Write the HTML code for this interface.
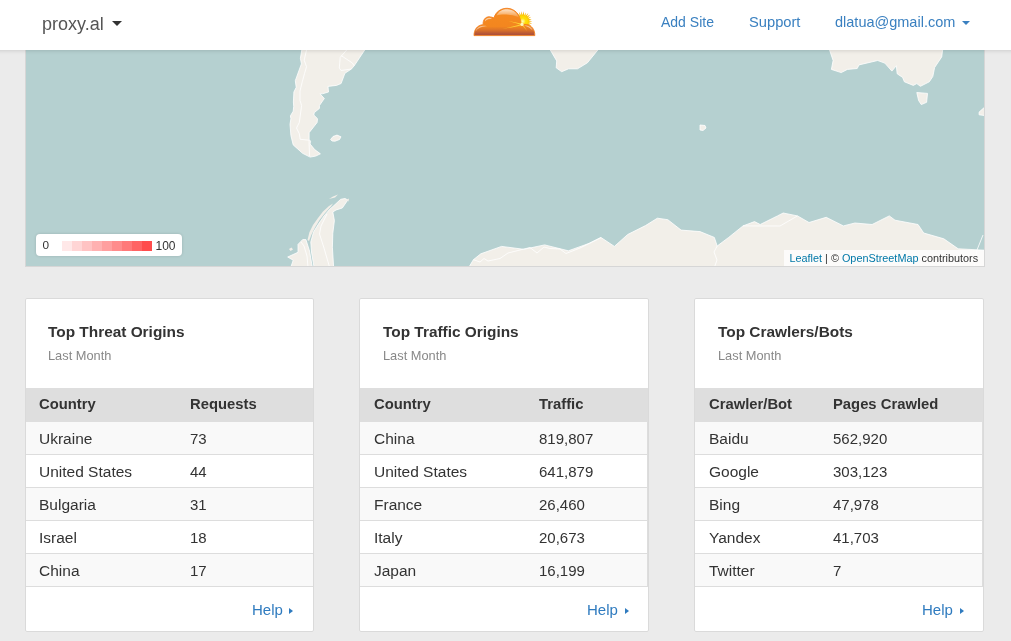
<!DOCTYPE html>
<html><head><meta charset="utf-8">
<style>
*{margin:0;padding:0;box-sizing:border-box}
html,body{width:1011px;height:641px;overflow:hidden;background:#ebebeb;font-family:"Liberation Sans",sans-serif;color:#333}
.abs{position:absolute;white-space:nowrap;line-height:1}
#hdr,#map,.card{will-change:transform}
#hdr{position:absolute;left:0;top:0;width:1011px;height:50px;background:#fff;z-index:5}
#hdr:before{content:"";position:absolute;left:-20px;right:-20px;top:0;height:50px;box-shadow:0 1px 4px rgba(0,0,0,.13);z-index:-1;background:#fff}
#map{position:absolute;left:25px;top:40px;width:960px;height:227px;border:1px solid #d6d6d6;background:#b5d0d0;overflow:hidden}
.card{position:absolute;top:298px;height:334px;background:#fff;border:1px solid #dadada;border-radius:2px;overflow:hidden}
.ttl{font-weight:bold;font-size:15.4px;color:#333}
.sub{font-size:12.8px;color:#888}
.th{position:absolute;left:0;top:89px;height:34px;background:#dedede}
.row{position:absolute;left:0;height:33px;border-bottom:1px solid #ddd}
.odd{background:#f9f9f9}
.r2{width:288px;border-right:1px solid #ddd}
.hd{font-weight:bold;font-size:14.8px;color:#333}
.td{font-size:15.5px;color:#333}
.tn{font-size:15px;color:#333}
.help{font-size:15px;color:#2f7bbf}
.tri{position:absolute;width:0;height:0;border-top:3px solid transparent;border-bottom:3px solid transparent;border-left:4px solid #2f7bbf}
</style></head><body>
<div id="hdr">
  <div class="abs" style="left:42px;top:14.5px;font-size:18px;color:#555">proxy.al</div>
  <div class="abs" style="left:112px;top:21px;width:0;height:0;border-left:5px solid transparent;border-right:5px solid transparent;border-top:5px solid #333"></div>
  <svg class="abs" style="left:470px;top:4px" width="70" height="36" viewBox="470 4 70 36">
    <defs>
      <linearGradient id="cg" gradientUnits="userSpaceOnUse" x1="0" y1="8" x2="0" y2="36">
        <stop offset="0" stop-color="#f68b1f"/>
        <stop offset="0.66" stop-color="#f3861f"/>
        <stop offset="0.8" stop-color="#d8702a"/>
        <stop offset="0.93" stop-color="#b2533a"/>
        <stop offset="1" stop-color="#a94b34"/>
      </linearGradient>
      <radialGradient id="sg" gradientUnits="userSpaceOnUse" cx="522.6" cy="21.3" r="10.5">
        <stop offset="0" stop-color="#fff9a0"/>
        <stop offset="0.5" stop-color="#ffd600"/>
        <stop offset="0.8" stop-color="#f9b214"/>
        <stop offset="1" stop-color="#f6a23a" stop-opacity="0.6"/>
      </radialGradient>
      <radialGradient id="sc" gradientUnits="userSpaceOnUse" cx="522.6" cy="21.3" r="6.5">
        <stop offset="0" stop-color="#fffbc0"/>
        <stop offset="0.5" stop-color="#ffe000"/>
        <stop offset="1" stop-color="#ffd000" stop-opacity="0"/>
      </radialGradient>
      <linearGradient id="hg" x1="0" y1="0" x2="0" y2="1">
        <stop offset="0" stop-color="#fff" stop-opacity="0.75"/>
        <stop offset="1" stop-color="#fff" stop-opacity="0.1"/>
      </linearGradient>
    </defs>
    <polygon fill="url(#sg)" points="532.33,21.30 528.85,22.06 532.47,23.73 528.49,23.53 531.38,25.91 527.78,24.88 530.27,28.09 526.78,26.02 528.44,29.76 525.53,26.88 525.97,30.17 524.11,27.42 523.74,30.65 522.60,27.60 521.33,31.80 521.09,27.42 519.14,30.43 519.67,26.88 517.07,29.31 518.42,26.02 514.52,28.46 517.42,24.88 513.69,25.97 516.71,23.53 512.34,23.83 516.35,22.06 512.53,21.30 516.35,20.54 512.60,18.84 516.71,19.07 514.09,16.83 517.42,17.72 514.90,14.48 518.42,16.58 516.57,12.56 519.67,15.72 519.01,11.83 521.09,15.18 521.34,10.94 522.60,15.00 523.85,11.04 524.11,15.18 525.97,12.43 525.53,15.72 528.54,12.69 526.78,16.58 530.26,14.52 527.78,17.72 531.30,16.74 528.49,19.07 531.77,19.04 528.85,20.54"/>
    <circle cx="522.6" cy="21.3" r="6.5" fill="url(#sc)"/>
    <path d="M474 35.6 C474 30 477 25 483.2 24.7 C482.6 20 485.5 16.8 489 16.8 C491 16.8 493 17.6 494 18 C495.5 12 501 8.1 507.2 8.3 C514.5 8.6 520.5 14 521 24.2 C522.5 24.5 524.5 24.3 526.3 24.4 C531 25 535 29 534.8 35.6 Z" fill="url(#cg)" stroke="#f38020" stroke-width="0.9"/>
    <path d="M496.5 15.5 C498.5 11 503 9.2 507.5 9.3 C513 9.5 517.5 13 518.8 17.5 C514 14.5 502 13.8 496.5 15.5Z" fill="url(#hg)"/>
    <path d="M484.8 21.5 C485 19 487 17.8 489 17.8 C490.5 17.8 491.5 18.3 492 18.8 C489.5 18.8 486.5 19.5 484.8 21.5Z" fill="#fff" opacity=".55"/>
    <path d="M475.5 31.5 C476.5 28 479 26 483 25.7 C485 25.6 487 26 487.5 26.3 C482 26.3 478 28 475.5 31.5Z" fill="#fff" opacity=".5"/>
    <path d="M524 25.5 C527 25.2 531 26 532.8 30.5 C530 27.8 527 26.5 524 25.5Z" fill="#fff" opacity=".5"/>
    <g fill="#ffe43a">
      <path d="M508.5 21 L522 23.8 L522 25 Z" opacity=".85"/>
      <path d="M502 28.8 C510 27.4 516 25.8 522 23.8 L522.3 25 C516 26.6 510 28 502 28.8Z" opacity=".8"/>
      <path d="M521.5 24.4 L522.6 24 L527.2 31 Z" opacity=".75"/>
    </g>
    <circle cx="522" cy="24.4" r="1.6" fill="#fffbd0" opacity=".9"/>
  </svg>
  <div class="abs" style="left:661px;top:15px;font-size:14px;color:#3a80c0">Add Site</div>
  <div class="abs" style="left:749px;top:15px;font-size:14.7px;color:#3a80c0">Support</div>
  <div class="abs" style="left:835px;top:15px;font-size:14.5px;color:#3a80c0">dlatua@gmail.com</div>
  <div class="abs" style="left:962px;top:21px;width:0;height:0;border-left:4px solid transparent;border-right:4px solid transparent;border-top:4px solid #3a80c0"></div>
</div>

<div id="map">
  <svg width="960" height="227" viewBox="25 40 960 227" style="position:absolute;left:-1px;top:-1px">
    <g fill="#f2efe9" stroke="#fff" stroke-width="0.8">
    <!-- South America -->
    <path d="M301.8 40 L366.4 40 L364.7 50 L354.2 65.8 L351.4 69 L344.9 73.3 L343.5 77 L341.1 83.5 L336.5 85.4 L328 86.4 L328.5 92 L322.4 93.8 L320 93.8 L324.3 98.5 L319.4 105.6 L319.4 108.4 L314.3 112.6 L313.8 115 L317.5 118.7 L317.1 122.5 L309.1 132.7 L309.1 139.3 L310.5 141.2 L310.1 144 L314.7 149.6 L320.4 153.8 L315.7 156.1 L310.1 157.1 L302.6 153.3 L293.2 144.9 L290.9 135.5 L290 124.3 L290.9 118.7 L290.4 115.9 L293.2 111.2 L293.7 106.5 L293.4 102 L293.9 92 L296.2 87.3 L295.3 80.7 L301.4 63.9 L300.4 58.3 L301.8 50Z"/>
    <path d="M330.6 139.5 L333 136.5 L337 135.1 L341 136.8 L339.5 139.5 L335 141.2 L332 141Z"/>
    <!-- Antarctic peninsula -->
    <path d="M290.9 267 L293.2 260.2 L287.7 257 L298 252.3 L298 244.4 L302.7 239.6 L305.9 239.6 L309.5 251 L312.3 267Z"/>
    <path d="M314 267 L311.5 252 L310.8 242 L313.5 232 L318.5 224 L324 216 L329.5 209.5 L334 205.5 L340.7 199.3 L345 198.5 L347.8 200 L342.3 208 L336 210 L332.8 212 L334.4 220.6 L332.8 233.3 L332.4 247.2 L333.6 267Z"/>
    <path d="M307.5 240 L309.5 232 L313 225 L318 218 L323 211.5 L329 206 L333 203.5 L331 206.5 L325 213 L319.5 220 L315 227.5 L311.5 234.5 L309 241Z" stroke="none"/>
    <path d="M289 249 L291.5 247.5 L293 249.5 L290.5 251Z" stroke="none"/>
    <path d="M329 199 L333 196.5 L338 194.5 L335 197.5Z" stroke="none"/>
    <path d="M346 200 L349 198.5 L348.5 201.5Z" stroke="none"/>
    <!-- Antarctica coast -->
    <path d="M469 267 L473.4 259.7 L480.8 253.8 L501.6 246.4 L523.9 249.3 L544.6 244.9 L568.4 250.8 L589.1 243.4 L601 237.5 L614.4 246.4 L627.7 234.5 L645.5 225.6 L657.4 218.2 L667.8 219.7 L681.1 230.1 L700 231.6 L714.3 237.4 L717.2 246 L728.7 237.4 L743 225.9 L754.5 221.6 L760.2 224.5 L777.5 215.9 L783.2 213 L797.5 215.9 L809 222.5 L826.2 217.3 L843.4 225.9 L854.9 223 L872.1 224.5 L889.3 215.9 L895 220.2 L918 224.5 L923.7 233 L943.8 238.8 L958.2 248.8 L986 250.3 L986 267Z"/>
    <!-- Africa -->
    <path d="M550.3 40 L550.3 50 L556.7 60.9 L556.2 67.8 L561.7 71.7 L568.6 68.8 L577.5 68.8 L587.4 62.8 L597.8 50 L597.8 40Z"/>
    <!-- Australia -->
    <path d="M829.6 40 L829.6 50.1 L833.1 60.5 L831.4 69.4 L841.2 72.6 L847.4 69.4 L857.2 68.5 L859 64.9 L877.7 60.5 L884.8 63.1 L891.9 71.1 L896.3 65.8 L897.2 73.8 L902.6 77.4 L904.4 81.8 L913.3 85.4 L916.8 83.6 L920.4 86.3 L929.3 81.8 L932.8 76.5 L934.6 67.6 L941.7 56.9 L942.6 50.1 L942.6 40Z"/>
    <path d="M916.8 92.5 L927.5 93.4 L926.6 102.3 L921.3 104.6 L918.6 100.5Z"/>
    <path d="M986 105.9 L979.1 112.1 L979.1 114.8 L986 115.7Z"/>
    <path d="M700 125 L705 125.5 L706 128 L703 130.5 L700 130Z"/>
    </g>
    <g fill="none" stroke="#fff" stroke-width="0.9" opacity=".9">
      <path d="M306.5 40 L306.5 50 L304.2 60.2 L306.5 66.7 L304.6 73.3 L302.3 81.7 L300 91 L300 100.4 L301.6 105.6 L299.3 122.5 L296.5 128 L299.3 133.7 L300.2 139.3 L309.1 140.2 L309.1 144 L309.6 156.1"/>
      <path d="M346.7 50 L340.2 57.4 L339.3 68.1 L341.1 70.5 L351.4 69 M341.1 55.5 L352.4 63 L354.2 65.8"/>
      <path d="M301 242 L304 246 L307 256 L308 267"/>
      <path d="M327 214 L321 226 L319.5 234 L324 248 L329.5 267"/>
      <path d="M473.4 259.7 L480 262 L484 258.5 L488 261 L500 258.5 L508 253 L518 250.5 L530 247.5 L537 253 L544 247 L550 248.5 L560 249 L566 253.5 L580 248 L601 237.5"/>
      <path d="M717.2 246 L714 252 L717 260 L714.5 267 M983 235 L977 250 L974 267"/>
      <path d="M743 225.9 L780 226 L797.5 215.9"/>
    </g>
    <g></g>
  </svg>
  <div style="position:absolute;left:10px;top:193px;width:146px;height:22px;background:#fff;border-radius:4px;box-shadow:0 0 3px rgba(0,0,0,.15)">
    <div class="abs" style="left:6.5px;top:6px;font-size:11.8px;color:#333">0</div>
    <div style="position:absolute;left:26px;top:7px;height:10px;width:90px;display:flex">
      <i style="flex:1;background:#ffe8e8"></i><i style="flex:1;background:#ffd5d5"></i><i style="flex:1;background:#ffc3c3"></i><i style="flex:1;background:#ffb1b1"></i><i style="flex:1;background:#ff9f9f"></i><i style="flex:1;background:#ff8c8c"></i><i style="flex:1;background:#ff7979"></i><i style="flex:1;background:#ff6464"></i><i style="flex:1;background:#ff4c4c"></i>
    </div>
    <div class="abs" style="left:119.5px;top:6px;font-size:12px;color:#333">100</div>
  </div>
  <div style="position:absolute;left:758px;top:209px;width:200px;height:16px;background:rgba(255,255,255,.75)">
    <div class="abs" style="left:5.5px;top:3px;font-size:10.85px;color:#333"><span style="color:#0078a8">Leaflet</span> | © <span style="color:#0078a8">OpenStreetMap</span> contributors</div>
  </div>
</div>

<!-- Card 1 -->
<div class="card" style="left:25px;width:289px">
  <div class="abs ttl" style="left:22px;top:25px">Top Threat Origins</div>
  <div class="abs sub" style="left:22px;top:51px">Last Month</div>
  <div class="th" style="width:288px"><div class="abs hd" style="left:13px;top:9px">Country</div><div class="abs hd" style="left:164px;top:9px">Requests</div></div>
  <div class="row odd" style="top:123px;width:288px"><div class="abs td" style="left:13px;top:9px">Ukraine</div><div class="abs tn" style="left:164px;top:9px">73</div></div>
  <div class="row" style="top:156px;width:288px"><div class="abs td" style="left:13px;top:9px">United States</div><div class="abs tn" style="left:164px;top:9px">44</div></div>
  <div class="row odd" style="top:189px;width:288px"><div class="abs td" style="left:13px;top:9px">Bulgaria</div><div class="abs tn" style="left:164px;top:9px">31</div></div>
  <div class="row" style="top:222px;width:288px"><div class="abs td" style="left:13px;top:9px">Israel</div><div class="abs tn" style="left:164px;top:9px">18</div></div>
  <div class="row odd" style="top:255px;width:288px"><div class="abs td" style="left:13px;top:9px">China</div><div class="abs tn" style="left:164px;top:9px">17</div></div>
  <div class="abs help" style="left:226px;top:303px">Help</div>
  <div class="tri" style="left:263px;top:309px"></div>
</div>

<!-- Card 2 -->
<div class="card" style="left:359px;width:290px">
  <div class="abs ttl" style="left:23px;top:25px">Top Traffic Origins</div>
  <div class="abs sub" style="left:23px;top:51px">Last Month</div>
  <div class="th" style="width:289px"><div class="abs hd" style="left:14px;top:9px">Country</div><div class="abs hd" style="left:179px;top:9px">Traffic</div></div>
  <div class="row odd r2" style="top:123px"><div class="abs td" style="left:14px;top:9px">China</div><div class="abs tn" style="left:179px;top:9px">819,807</div></div>
  <div class="row r2" style="top:156px"><div class="abs td" style="left:14px;top:9px">United States</div><div class="abs tn" style="left:179px;top:9px">641,879</div></div>
  <div class="row odd r2" style="top:189px"><div class="abs td" style="left:14px;top:9px">France</div><div class="abs tn" style="left:179px;top:9px">26,460</div></div>
  <div class="row r2" style="top:222px"><div class="abs td" style="left:14px;top:9px">Italy</div><div class="abs tn" style="left:179px;top:9px">20,673</div></div>
  <div class="row odd r2" style="top:255px"><div class="abs td" style="left:14px;top:9px">Japan</div><div class="abs tn" style="left:179px;top:9px">16,199</div></div>
  <div class="abs help" style="left:227px;top:303px">Help</div>
  <div class="tri" style="left:264.5px;top:309px"></div>
</div>

<!-- Card 3 -->
<div class="card" style="left:694px;width:290px">
  <div class="abs ttl" style="left:23px;top:25px">Top Crawlers/Bots</div>
  <div class="abs sub" style="left:23px;top:51px">Last Month</div>
  <div class="th" style="width:289px"><div class="abs hd" style="left:14px;top:9px">Crawler/Bot</div><div class="abs hd" style="left:138px;top:9px">Pages Crawled</div></div>
  <div class="row odd r2" style="top:123px"><div class="abs td" style="left:14px;top:9px">Baidu</div><div class="abs tn" style="left:138px;top:9px">562,920</div></div>
  <div class="row r2" style="top:156px"><div class="abs td" style="left:14px;top:9px">Google</div><div class="abs tn" style="left:138px;top:9px">303,123</div></div>
  <div class="row odd r2" style="top:189px"><div class="abs td" style="left:14px;top:9px">Bing</div><div class="abs tn" style="left:138px;top:9px">47,978</div></div>
  <div class="row r2" style="top:222px"><div class="abs td" style="left:14px;top:9px">Yandex</div><div class="abs tn" style="left:138px;top:9px">41,703</div></div>
  <div class="row odd r2" style="top:255px"><div class="abs td" style="left:14px;top:9px">Twitter</div><div class="abs tn" style="left:138px;top:9px">7</div></div>
  <div class="abs help" style="left:227px;top:303px">Help</div>
  <div class="tri" style="left:264.5px;top:309px"></div>
</div>
</body></html>
